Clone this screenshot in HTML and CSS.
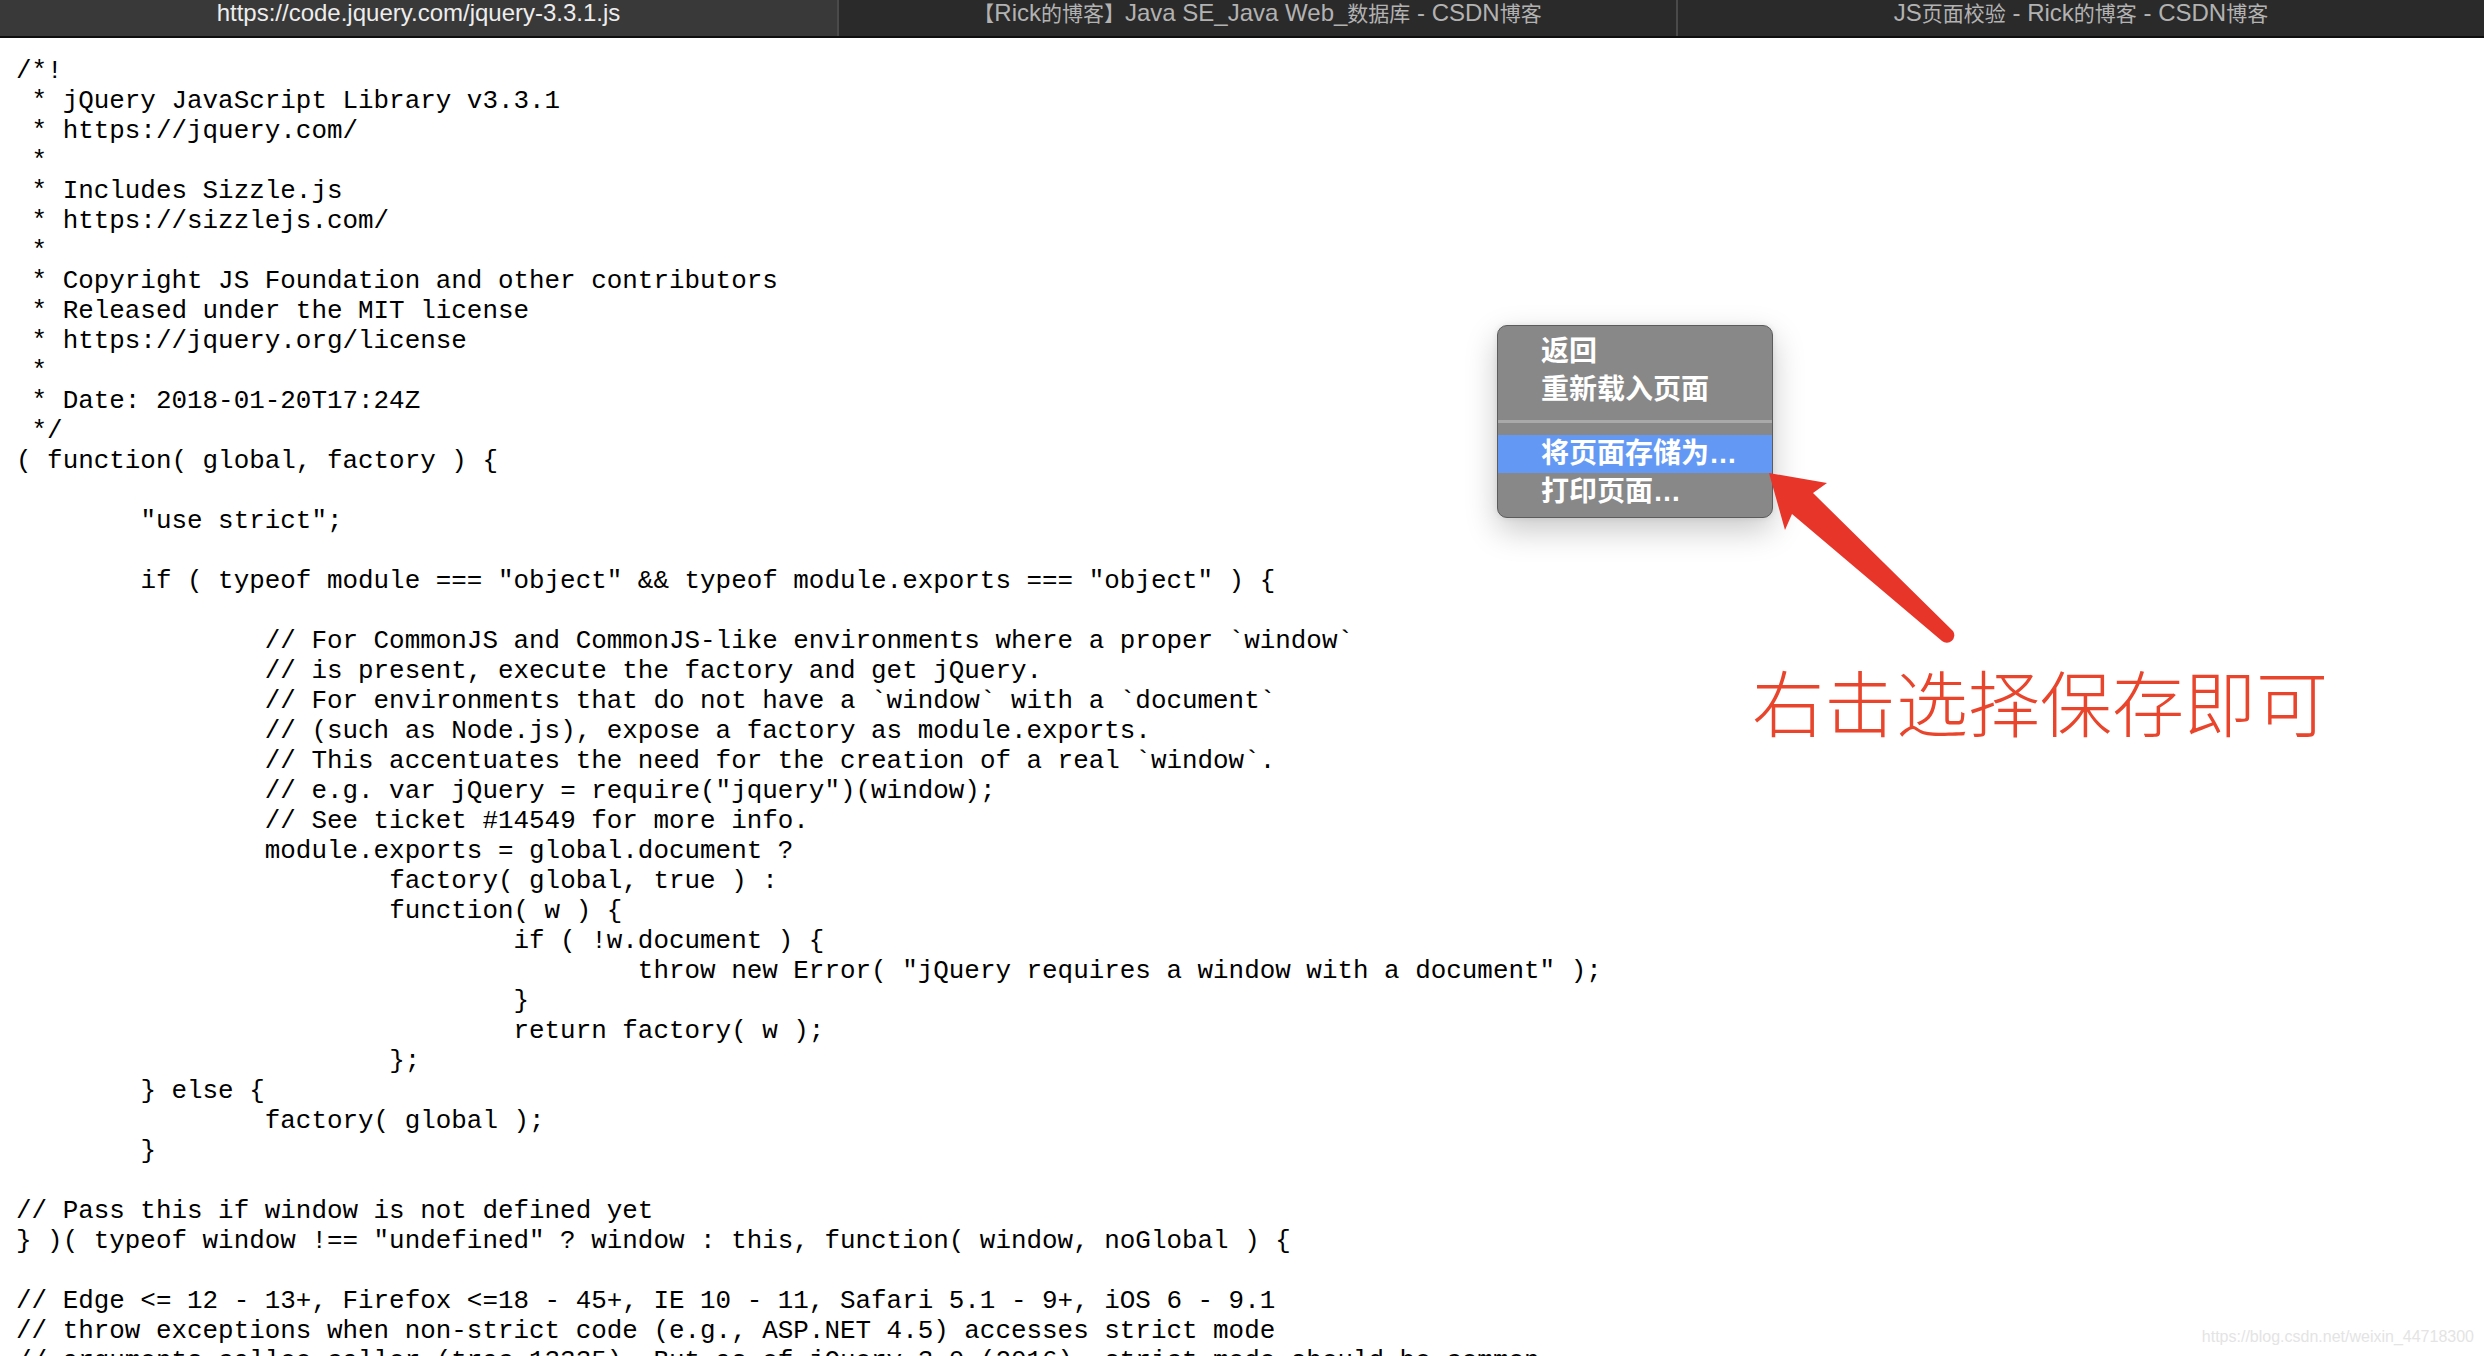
FILE: index.html
```
<!DOCTYPE html>
<html lang="zh-CN">
<head>
  <meta charset="UTF-8">
  <title>jquery-3.3.1.js</title>
  <link rel="stylesheet" href="styles.css">
</head>
<body>

  <div class="tab-bar">
    <div class="tab tab-active">https://code.jquery.com/jquery-3.3.1.js</div>
    <div class="tab tab-second"><span class="cjk">【</span>Rick<span class="cjk">的博客】</span>Java SE_Java Web_<span class="cjk">数据库</span> - CSDN<span class="cjk">博客</span></div>
    <div class="tab tab-last">JS<span class="cjk">页面校验</span> - Rick<span class="cjk">的博客</span> - CSDN<span class="cjk">博客</span></div>
  </div>

<pre class="source">/*!
 * jQuery JavaScript Library v3.3.1
 * https://jquery.com/
 *
 * Includes Sizzle.js
 * https://sizzlejs.com/
 *
 * Copyright JS Foundation and other contributors
 * Released under the MIT license
 * https://jquery.org/license
 *
 * Date: 2018-01-20T17:24Z
 */
( function( global, factory ) {

	"use strict";

	if ( typeof module === "object" &amp;&amp; typeof module.exports === "object" ) {

		// For CommonJS and CommonJS-like environments where a proper `window`
		// is present, execute the factory and get jQuery.
		// For environments that do not have a `window` with a `document`
		// (such as Node.js), expose a factory as module.exports.
		// This accentuates the need for the creation of a real `window`.
		// e.g. var jQuery = require("jquery")(window);
		// See ticket #14549 for more info.
		module.exports = global.document ?
			factory( global, true ) :
			function( w ) {
				if ( !w.document ) {
					throw new Error( "jQuery requires a window with a document" );
				}
				return factory( w );
			};
	} else {
		factory( global );
	}

// Pass this if window is not defined yet
} )( typeof window !== "undefined" ? window : this, function( window, noGlobal ) {

// Edge &lt;= 12 - 13+, Firefox &lt;=18 - 45+, IE 10 - 11, Safari 5.1 - 9+, iOS 6 - 9.1
// throw exceptions when non-strict code (e.g., ASP.NET 4.5) accesses strict mode
// arguments.callee.caller (trac-13335). But as of jQuery 3.0 (2016), strict mode should be common
// enough that all such attempts are guarded in a try block.
"use strict";
</pre>

  <!-- context menu -->
  <div class="context-menu">
    <div class="menu-item">返回</div>
    <div class="menu-item">重新载入页面</div>
    <div class="menu-separator"></div>
    <div class="menu-item menu-item-selected">将页面存储为…</div>
    <div class="menu-item">打印页面…</div>
  </div>

  <!-- annotation -->
  <svg class="note-arrow" width="200" height="185" viewBox="0 0 200 185">
    <path d="M9 8 L67 18 L53 28 L193 166 A7.5 7.5 0 0 1 182 176 L32 49 L25 65 Z" fill="#e8352a"/>
  </svg>
  <div class="note-text">右击选择保存即可</div>

  <div class="watermark">https://blog.csdn.net/weixin_44718300</div>

</body>
</html>
```

FILE: styles.css
```
* {
  box-sizing: border-box;
}

html, body {
  margin: 0;
  padding: 0;
}

body {
  position: relative;
  height: 100vh;
  overflow: hidden;
  background-color: #fff;
}

.tab-bar {
  display: flex;
  height: 38px;
  background-color: #2a2a2a;
  border-bottom: 2px solid #0e0e0e;
  font-family: "Liberation Sans", "Noto Sans CJK SC", Arial, sans-serif;
  font-size: 24px;
  line-height: 26px;
}

.tab {
  height: 36px;
  text-align: center;
  color: #b2b2b2;
  white-space: nowrap;
}

.tab .cjk {
  font-family: "Noto Sans CJK SC", sans-serif;
  font-size: 21px;
  line-height: 20px;
}

.tab-active {
  width: 837px;
  background-color: #393939;
  color: #ededed;
}

.tab-second {
  width: 839px;
  border-left: 2px solid #4a4a4a;
}

.tab-last {
  flex: 1;
  border-left: 2px solid #4a4a4a;
}

.source {
  margin: 0;
  padding: 18px 16px 0;
  font-family: "Liberation Mono", "Courier New", monospace;
  font-size: 25.92px;
  line-height: 30px;
  color: #000;
  tab-size: 8;
}

.context-menu {
  position: absolute;
  left: 1497px;
  top: 325px;
  width: 276px;
  height: 193px;
  padding-top: 7px;
  background-color: #888888;
  border: 1px solid #5c5c5c;
  border-radius: 10px;
  box-shadow: 0 12px 32px rgba(0, 0, 0, 0.22), 0 0 6px rgba(0, 0, 0, 0.08);
  font-family: "Liberation Sans", "Noto Sans CJK SC", sans-serif;
  font-size: 28px;
  font-weight: 600;
  color: #fff;
}

.menu-item {
  height: 38px;
  line-height: 38px;
  padding-left: 43px;
}

.menu-item-selected {
  background-color: #6399f4;
}

.menu-separator {
  height: 26px;
  padding-top: 11px;
}

.menu-separator::after {
  content: "";
  display: block;
  height: 3px;
  background-color: #a9a9a9;
}

.note-arrow {
  position: absolute;
  left: 1760px;
  top: 465px;
}

.note-text {
  position: absolute;
  left: 1752px;
  top: 664px;
  font-family: "Noto Sans CJK SC", sans-serif;
  font-size: 72px;
  font-weight: 300;
  line-height: 72px;
  color: #e8452c;
  white-space: nowrap;
}

.watermark {
  position: absolute;
  right: 10px;
  bottom: 10px;
  font-family: "Liberation Sans", Arial, sans-serif;
  font-size: 16px;
  color: #e4e4e4;
}
```
